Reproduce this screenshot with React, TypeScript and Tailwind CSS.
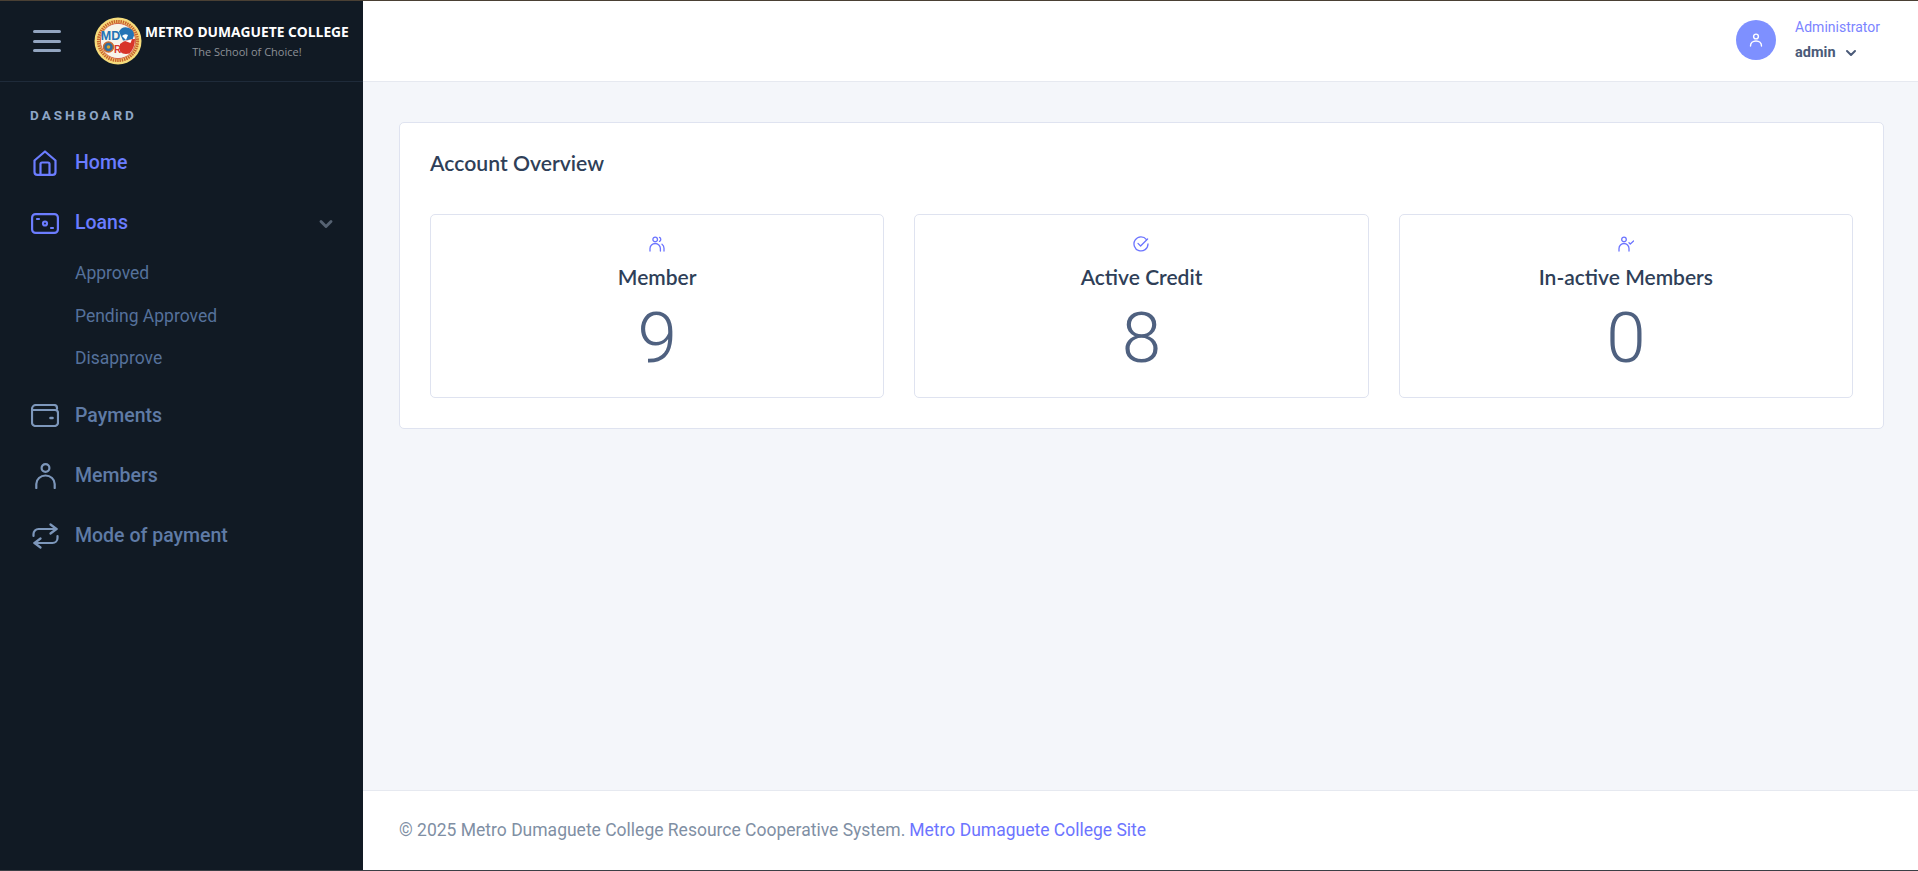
import React from 'react'
import { ChevronDown } from 'lucide-react'

const ROBOTO = "font-['Roboto',sans-serif]"

const HomeIcon = () => (
  <svg width="24" height="26" viewBox="0 0 24 26" fill="none" stroke="currentColor" strokeWidth="2.2" strokeLinejoin="round">
    <path d="M1.500 10.500 12 1.500l10.500 9V22a2.800 2.800 0 0 1-2.800 2.800H4.300A2.800 2.800 0 0 1 1.500 22z" />
    <path d="M7.500 24.800V14a1.500 1.500 0 0 1 1.500-1.500h6a1.500 1.500 0 0 1 1.500 1.500v10.800" />
  </svg>
)

const LoanIcon = () => (
  <svg width="28" height="21" viewBox="0 0 28 21" fill="none" stroke="currentColor" strokeWidth="2.2" strokeLinecap="round">
    <rect x="1.100" y="1.100" width="25.800" height="18.800" rx="3.500" />
    <circle cx="14" cy="10.500" r="2" />
    <path d="M6 6h2M20 15h2" />
  </svg>
)

const WalletIcon = () => (
  <svg width="28" height="23" viewBox="0 0 28 23" fill="none" stroke="currentColor" strokeWidth="2.200" strokeLinecap="round">
    <path d="M26 5V4a3 3 0 0 0-3-3H5a4 4 0 0 0-4 4v13.500A3.500 3.500 0 0 0 4.500 22h19a3.500 3.500 0 0 0 3.500-3.500V9a3 3 0 0 0-3-3H2" />
    <path d="M19.500 14h2" strokeWidth="2.600" />
  </svg>
)

const PersonIcon = () => (
  <svg width="21" height="26" viewBox="0 0 21 26" fill="none" stroke="currentColor" strokeWidth="2.200" strokeLinecap="round">
    <circle cx="10.500" cy="5" r="3.900" />
    <path d="M1.300 25v-4a9.200 8.500 0 0 1 18.400 0v4" />
  </svg>
)

const RepeatIcon = () => (
  <svg width="27" height="26" viewBox="0 0 27 26" fill="none" stroke="currentColor" strokeWidth="2.200" strokeLinecap="round" strokeLinejoin="round">
    <path d="M18.500 1.500l6 4.500-6 4.500" />
    <path d="M24.500 6H6.500a5 5 0 0 0-5 5v2" />
    <path d="M8.500 24.500l-6-4.500 6-4.500" />
    <path d="M2.500 20h18a5 5 0 0 0 5-5v-2" />
  </svg>
)

const UsersIcon = () => (
  <svg width="16" height="16" viewBox="0 0 16 16" fill="none" stroke="currentColor" strokeWidth="1.300" strokeLinecap="round">
    <circle cx="6.200" cy="3.400" r="2.300" />
    <path d="M1 15v-2.500a5.200 5 0 0 1 10.400 0V15" />
    <path d="M10.500 1.400a2.200 2.200 0 0 1 0 4" />
    <path d="M13 8.200a5 5 0 0 1 2 4V15" />
  </svg>
)

const CheckCircleIcon = () => (
  <svg width="16" height="16" viewBox="0 0 16 16" fill="none" stroke="currentColor" strokeWidth="1.300" strokeLinecap="round" strokeLinejoin="round">
    <path d="M13.500 3.600A7 7 0 1 0 15 8" />
    <path d="M5 7.400l2.600 2.600L14.600 3" />
  </svg>
)

const UserCheckIcon = () => (
  <svg width="16" height="16" viewBox="0 0 16 16" fill="none" stroke="currentColor" strokeWidth="1.300" strokeLinecap="round" strokeLinejoin="round">
    <circle cx="6" cy="3.400" r="2.300" />
    <path d="M1 15v-2.500a5 5 0 0 1 10 0V15" />
    <path d="M11 6.800l1.300 1.200L15.600 5" />
  </svg>
)

const Logo = () => (
  <svg width="48" height="48" viewBox="0 0 48 48">
    <circle cx="24" cy="24" r="23.500" fill="#f6dc7c" />
    <circle cx="24" cy="24" r="19.600" fill="none" stroke="#c9642e" strokeWidth="3" strokeDasharray="1.500 0.800" />
    <circle cx="24" cy="24" r="17.600" fill="#f7f4ea" stroke="#c8402c" strokeWidth="0.800" />
    <path d="M25 14.500a8 8 0 0 1 15 4l-1.500 4-9.500 1z" fill="#2473b5" />
    <path d="M28 19a5 5 0 0 1 6-1l-2 5z" fill="#fff" />
    <path d="M26 27c4-3.500 10-5 15-5 0 6-2 11-5.500 14.500-4 1-7 .5-9.500-2z" fill="#d8352a" />
    <path d="M31 24l7-1.800-1.500 3.800z" fill="#fff" />
    <text x="6.800" y="23" fontSize="12.500" fontWeight="700" fill="#2473b5" fontFamily="'Liberation Sans',sans-serif">MD</text>
    <circle cx="14.500" cy="30" r="5" fill="#2f6d9e" stroke="#c96a2e" strokeWidth="1.500" />
    <circle cx="14.500" cy="30" r="1.800" fill="#d9a531" />
    <text x="20" y="36" fontSize="10" fontWeight="700" fill="#d8352a" fontFamily="'Liberation Sans',sans-serif">R</text>
  </svg>
)

const navItems = [
  { label: 'Payments', icon: <WalletIcon /> },
  { label: 'Members', icon: <PersonIcon /> },
  { label: 'Mode of payment', icon: <RepeatIcon /> }
]

const subItems = ['Approved', 'Pending Approved', 'Disapprove']

const stats = [
  { label: 'Member', value: '9', icon: <UsersIcon /> },
  { label: 'Active Credit', value: '8', icon: <CheckCircleIcon /> },
  { label: 'In-active Members', value: '0', icon: <UserCheckIcon /> }
]

const NavRow = ({ icon, label, active }: { icon: React.ReactNode; label: string; active?: boolean }) => (
  <div className={`flex h-[60px] items-center ${active ? 'text-[#6c7dff]' : 'text-[#7d97bb]'}`}>
    <div className="flex w-[30px] shrink-0 justify-center">{icon}</div>
    <span className={`ml-[15px] text-[19.5px] font-medium ${active ? 'text-[#6a7cff]' : 'text-[#5f7ba6]'}`}>{label}</span>
  </div>
)

export default function App() {
  return (
    <div className={`flex h-screen flex-col overflow-hidden border-t border-b border-t-[#4a4034] border-b-[#3a3f45] bg-[#f4f6fa] ${ROBOTO}`}>
      <div className="flex min-h-0 flex-1">
        {/* Sidebar */}
        <aside className="flex w-[363px] shrink-0 flex-col bg-[#111a24]">
          <div className="flex h-[81px] shrink-0 items-center border-b border-[#1f2b3a] pl-[33px]">
            <div className="flex w-[28px] flex-col gap-[6.5px]">
              <span className="h-[3px] rounded bg-[#93a5c0]" />
              <span className="h-[3px] rounded bg-[#93a5c0]" />
              <span className="h-[3px] rounded bg-[#93a5c0]" />
            </div>
            <div className="ml-[33px]">
              <Logo />
            </div>
            <div className="ml-[3px] flex flex-col items-center">
              <span className="font-['Open_Sans',sans-serif] text-[13.8px] leading-[20px] font-bold whitespace-nowrap text-white">METRO DUMAGUETE COLLEGE</span>
              <span className="mt-[1px] font-['Open_Sans',sans-serif] text-[11px] leading-[17px] text-[#8d9197]">The School of Choice!</span>
            </div>
          </div>

          <div className="pt-[24px] pl-[30px] text-[13.5px] leading-[19px] font-bold tracking-[3px] text-[#8ea6c6]">DASHBOARD</div>

          <nav className="mt-[8px] pl-[30px]">
            <NavRow active icon={<HomeIcon />} label="Home" />
            <div className="relative">
              <NavRow active icon={<LoanIcon />} label="Loans" />
              <ChevronDown className="absolute top-[21px] left-[286px] size-[20px] text-[#566272]" strokeWidth={3.5} />
            </div>
            <div className="-mt-[1px] flex flex-col pl-[45px]">
              {subItems.map(item => (
                <div key={item} className="flex h-[42.5px] items-center text-[17.5px] text-[#55719b]">
                  {item}
                </div>
              ))}
            </div>
            <div className="pt-[6px]">
              {navItems.map(item => (
                <NavRow key={item.label} icon={item.icon} label={item.label} />
              ))}
            </div>
          </nav>
        </aside>

        <div className="flex min-w-0 flex-1 flex-col">
          {/* Header */}
          <header className="flex h-[81px] shrink-0 items-center justify-end border-b border-[#e6e9f0] bg-white pr-[38px] pb-[2px]">
            <div className="flex size-[40px] items-center justify-center rounded-full bg-[#7e90ff] text-white">
              <svg width="14" height="14" viewBox="0 0 14 14" fill="none" stroke="currentColor" strokeWidth="1.400" strokeLinecap="round">
                <circle cx="7" cy="3.500" r="2.400" />
                <path d="M1.500 13c0-3 2.400-5 5.500-5s5.500 2 5.500 5" />
              </svg>
            </div>
            <div className="ml-[19px] flex flex-col">
              <span className="text-[14px] leading-[20px] text-[#7b84ff]">Administrator</span>
              <span className="mt-[6px] flex items-center text-[14.5px] leading-[20px] font-bold text-[#4a5a78]">
                admin
                <ChevronDown className="ml-[7px] size-[16px]" strokeWidth={3} />
              </span>
            </div>
          </header>

          {/* Content */}
          <main className="min-h-0 flex-1 pt-[40px] pr-[34px] pl-[36px]">
            <section className="rounded-[5px] border border-[#dfe3f0] bg-white px-[30px] pt-[27px] pb-[30px] font-['Lato',sans-serif]">
              <h2 className="text-[21.2px] leading-[26px] font-semibold text-[#2f3f58]">Account Overview</h2>
              <div className="mt-[38px] grid grid-cols-3 gap-[30px]">
                {stats.map(stat => (
                  <div key={stat.label} className="flex h-[184px] flex-col items-center rounded-[5px] border border-[#dfe3f0] pt-[21px]">
                    <div className="text-[#6c74ff]">{stat.icon}</div>
                    <div className="mt-[12px] text-[21px] leading-[26px] font-semibold text-[#2f3f58]">{stat.label}</div>
                    <div className="mt-[6px] font-['Roboto',sans-serif] text-[71px] leading-[84px] font-light text-[#4f6180]">{stat.value}</div>
                  </div>
                ))}
              </div>
            </section>
          </main>

          {/* Footer */}
          <footer className="flex h-[80px] shrink-0 items-center border-t border-[#e6e9f0] bg-white pl-[36px] text-[17.5px] text-[#7f8fa4]">
            <span>© 2025 Metro Dumaguete College Resource Cooperative System.</span>
            <a className="ml-[4px] text-[#6c74ff]">Metro Dumaguete College Site</a>
          </footer>
        </div>
      </div>
    </div>
  )
}
